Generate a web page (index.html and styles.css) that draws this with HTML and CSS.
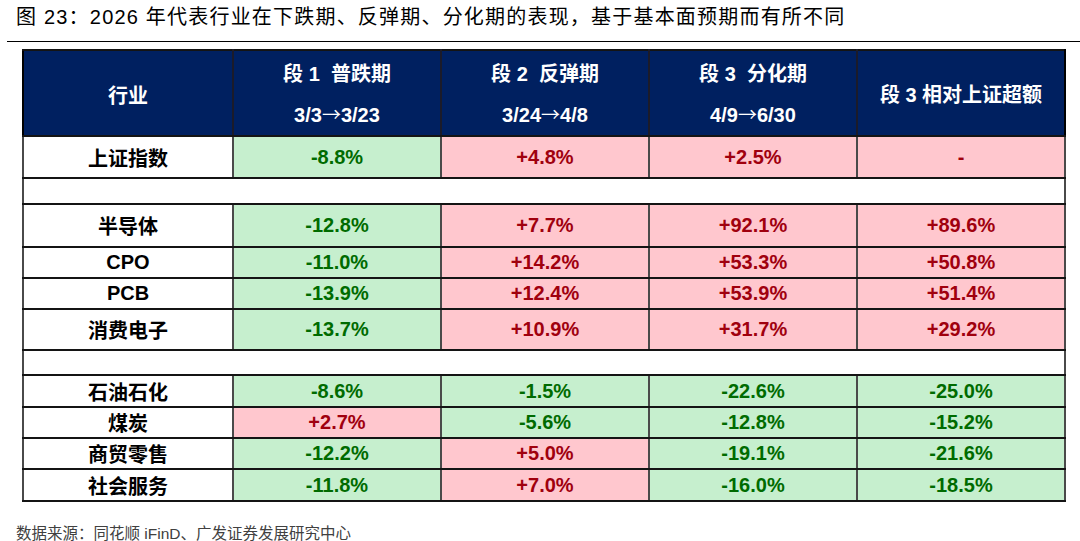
FILE: index.html
```html
<!DOCTYPE html>
<html lang="zh-CN">
<head>
<meta charset="utf-8">
<title>图 23</title>
<link rel="stylesheet" href="styles.css">
</head>
<body>
<div class="page">
  <h1 class="title">图 23：2026 年代表行业在下跌期、反弹期、分化期的表现，基于基本面预期而有所不同</h1>
  <div class="rule"></div>
  <table class="data">
    <colgroup>
      <col class="c-name">
      <col class="c-val">
      <col class="c-val">
      <col class="c-val">
      <col class="c-val">
    </colgroup>
    <thead>
      <tr class="r-head">
        <th>行业</th>
        <th><div class="h1">段 1  普跌期</div><div class="h2">3/3<span class="arrow">→</span>3/23</div></th>
        <th><div class="h1">段 2  反弹期</div><div class="h2">3/24<span class="arrow">→</span>4/8</div></th>
        <th><div class="h1">段 3  分化期</div><div class="h2">4/9<span class="arrow">→</span>6/30</div></th>
        <th><div class="h1">段 3 相对上证超额</div></th>
      </tr>
    </thead>
    <tbody>
      <tr class="r-42">
        <td class="name">上证指数</td>
        <td class="dn">-8.8%</td>
        <td class="up">+4.8%</td>
        <td class="up">+2.5%</td>
        <td class="up">-</td>
      </tr>
      <tr class="r-blank r-26"><td colspan="5"></td></tr>
      <tr class="r-43">
        <td class="name">半导体</td>
        <td class="dn">-12.8%</td>
        <td class="up">+7.7%</td>
        <td class="up">+92.1%</td>
        <td class="up">+89.6%</td>
      </tr>
      <tr class="r-31">
        <td class="name latin">CPO</td>
        <td class="dn">-11.0%</td>
        <td class="up">+14.2%</td>
        <td class="up">+53.3%</td>
        <td class="up">+50.8%</td>
      </tr>
      <tr class="r-31">
        <td class="name latin">PCB</td>
        <td class="dn">-13.9%</td>
        <td class="up">+12.4%</td>
        <td class="up">+53.9%</td>
        <td class="up">+51.4%</td>
      </tr>
      <tr class="r-41">
        <td class="name">消费电子</td>
        <td class="dn">-13.7%</td>
        <td class="up">+10.9%</td>
        <td class="up">+31.7%</td>
        <td class="up">+29.2%</td>
      </tr>
      <tr class="r-blank r-25"><td colspan="5"></td></tr>
      <tr class="r-32">
        <td class="name">石油石化</td>
        <td class="dn">-8.6%</td>
        <td class="dn">-1.5%</td>
        <td class="dn">-22.6%</td>
        <td class="dn">-25.0%</td>
      </tr>
      <tr class="r-31">
        <td class="name">煤炭</td>
        <td class="up">+2.7%</td>
        <td class="dn">-5.6%</td>
        <td class="dn">-12.8%</td>
        <td class="dn">-15.2%</td>
      </tr>
      <tr class="r-31">
        <td class="name">商贸零售</td>
        <td class="dn">-12.2%</td>
        <td class="up">+5.0%</td>
        <td class="dn">-19.1%</td>
        <td class="dn">-21.6%</td>
      </tr>
      <tr class="r-32">
        <td class="name">社会服务</td>
        <td class="dn">-11.8%</td>
        <td class="up">+7.0%</td>
        <td class="dn">-16.0%</td>
        <td class="dn">-18.5%</td>
      </tr>
    </tbody>
  </table>
  <p class="source">数据来源：同花顺 iFinD、广发证券发展研究中心</p>
</div>
</body>
</html>
```

FILE: styles.css
```css
html, body {
  margin: 0;
  padding: 0;
  background: #ffffff;
}

body {
  font-family: "Liberation Sans", "Noto Sans CJK SC", sans-serif;
  color: #000;
}

.page {
  width: 1080px;
  height: 541px;
  overflow: hidden;
}

.title {
  margin: 5px 0 0 16px;
  font-size: 20px;
  line-height: 24px;
  font-weight: 400;
  letter-spacing: 1.2px;
  white-space: nowrap;
  color: #000;
}

.rule {
  margin: 12px 0 0 7px;
  height: 0;
  border-top: 1px solid #000;
}

.data {
  margin: 7px 0 0 22px;
  width: 1042px;
  table-layout: fixed;
  border-collapse: collapse;
  border: 2px solid #000;
}

.c-name { width: 210px; }
.c-val { width: 208px; }

.data th,
.data td {
  padding: 0;
  text-align: center;
  vertical-align: middle;
  border-top: 2px solid #141414;
  border-bottom: 2px solid #141414;
  border-left: 2px solid #4a4a4a;
  border-right: 2px solid #4a4a4a;
  white-space: pre;
}

.r-head th {
  background: #002060;
  color: #fff;
  font-size: 20px;
  font-weight: 700;
  height: 80px;
  border-left-color: #1b1b2a;
  border-right-color: #1b1b2a;
  padding-top: 3px;
}

.r-head th:first-child { border-left-color: #000; }
.r-head th:last-child { border-right-color: #000; }

.h1, .h2 {
  line-height: 40px;
}

.arrow {
  font-family: "Noto Sans CJK SC", sans-serif;
  font-weight: 400;
  font-size: 19px;
}

.data td {
  font-size: 20px;
  font-weight: 700;
}

.name {
  background: #fff;
  color: #000;
}

.up {
  background: #ffc7ce;
  color: #a0000e;
}

.dn {
  background: #c6efce;
  color: #006b00;
}

.r-blank td { background: #fff; }

.r-42 td { height: 40px; }
.r-26 td { height: 24px; }
.r-43 td { height: 41px; }
.r-31 td { height: 29px; }
.r-41 td { height: 39px; }
.r-25 td { height: 23px; }
.r-32 td { height: 30px; }

.source {
  margin: 23px 0 0 16px;
  font-size: 15.5px;
  line-height: 18px;
  color: #404040;
  white-space: nowrap;
}
```
